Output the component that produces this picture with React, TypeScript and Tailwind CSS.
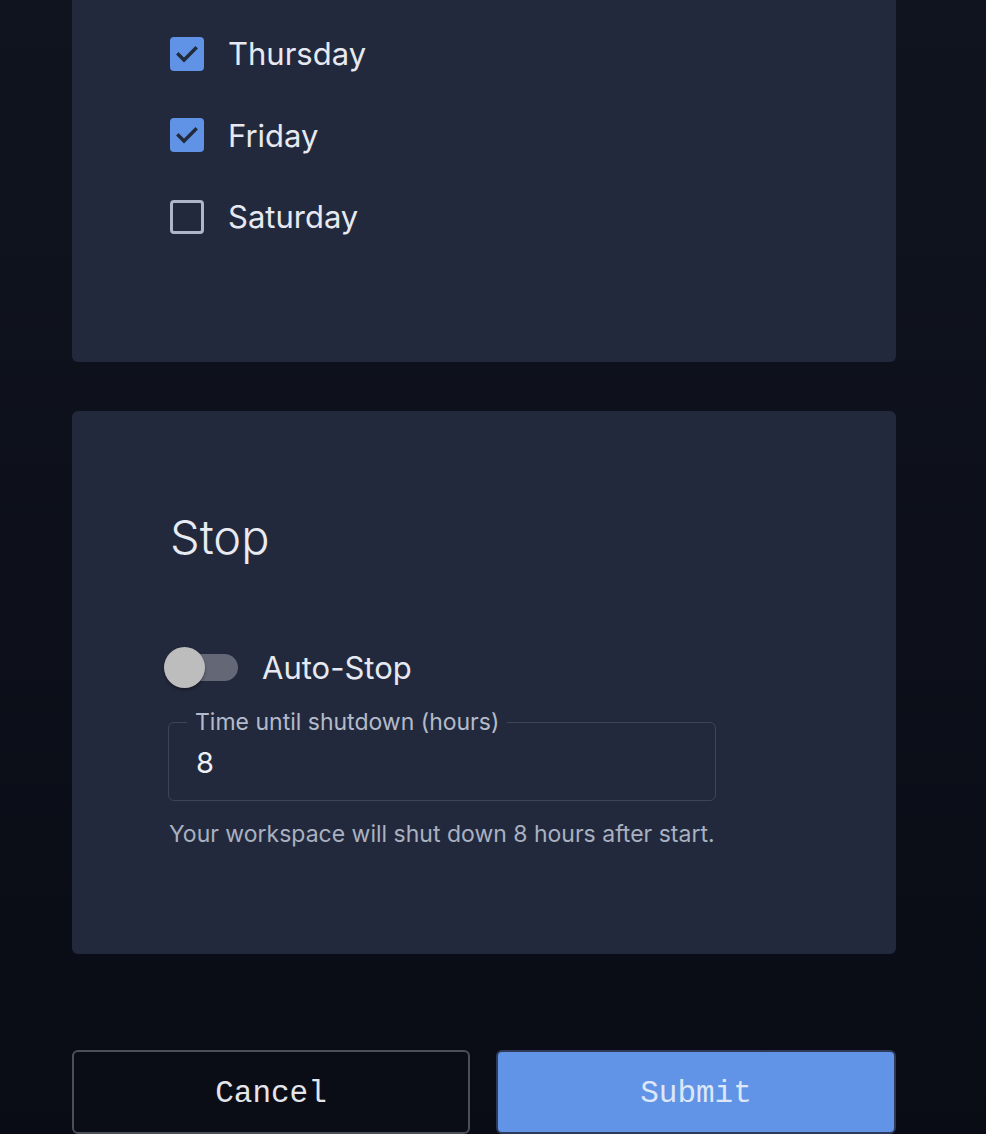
import { useState } from "react";

const days = [
  { name: "Thursday", checked: true },
  { name: "Friday", checked: true },
  { name: "Saturday", checked: false },
];

function Checkbox({ checked }: { checked: boolean }) {
  if (!checked) {
    return (
      <span className="block h-[34px] w-[34px] rounded-[4px] border-[3px] border-[#aeb6c7]" />
    );
  }
  return (
    <span className="flex h-[34px] w-[34px] items-center justify-center rounded-[4px] bg-[#6093e5]">
      <svg viewBox="0 0 34 34" className="h-[34px] w-[34px]">
        <path
          d="M8.5 17.5 L14 23 L25.5 11.5"
          fill="none"
          stroke="#222a3c"
          strokeWidth="3.4"
          strokeLinecap="square"
        />
      </svg>
    </span>
  );
}

export default function App() {
  const [hours, setHours] = useState("8");
  const [autoStop, setAutoStop] = useState(false);

  return (
    <div
      className="min-h-[1134px] bg-gradient-to-b from-[#10141f] to-[#090c15] pb-[2px]"
      style={{ fontFamily: "Inter, 'Noto Sans', sans-serif" }}
    >
      <div className="ml-[72px] w-[824px]">
        {/* days panel (continues above the fold) */}
        <section className="rounded-b-[6px] bg-[#23293c] px-[98px] pt-[13px] pb-[104px]">
          {days.map((d) => (
            <label key={d.name} className="flex h-[81.5px] items-center gap-[24px]">
              <Checkbox checked={d.checked} />
              <span className="text-[31px] leading-none text-[#e6e9f1]">{d.name}</span>
            </label>
          ))}
        </section>

        <section className="mt-[49px] rounded-[6px] bg-[#23293c] pl-[98px] pt-[99px] pb-[106px]">
          <h2 className="text-[47px] leading-[54px] font-light text-[#e8ebf2]">Stop</h2>

          <div className="mt-[83px] flex items-center">
            <button
              type="button"
              onClick={() => setAutoStop(!autoStop)}
              className="relative h-[41px] w-[76px]"
            >
              <span className="absolute left-[6px] top-[7px] h-[27px] w-[62px] rounded-full bg-[#636776]" />
              <span className="absolute left-[-6px] top-0 h-[41px] w-[41px] rounded-full bg-[#bdbdbd] shadow-[0_2px_3px_rgba(0,0,0,0.35)]" />
            </button>
            <span className="ml-[16px] text-[31px] leading-none text-[#e6e9f1]">Auto-Stop</span>
          </div>

          <div className="relative mt-[34px] ml-[-2px] h-[79px] w-[548px] rounded-[6px] border border-[#3b4459]">
            <span className="absolute left-[18px] top-[-15px] bg-[#23293c] px-[8px] text-[23px] leading-[28px] text-[#b3bbcb]">
              Time until shutdown (hours)
            </span>
            <input
              value={hours}
              onChange={(e) => setHours(e.target.value)}
              className="h-full w-full bg-transparent px-[27px] pt-[2px] text-[29px] text-[#eef0f5] outline-none"
            />
          </div>
          <p className="mt-[19px] ml-[-1px] text-[23px] leading-[28px] text-[#a9b1c1]">
            Your workspace will shut down {hours} hours after start.
          </p>
        </section>

        <div
          className="mt-[96px] flex gap-[26px]"
          style={{ fontFamily: "'Liberation Mono', 'DejaVu Sans Mono', monospace" }}
        >
          <button
            type="button"
            className="h-[84px] w-[398px] rounded-[6px] border-2 border-[#4b4f59] bg-[#0a0d16] pt-[5px] text-[31px] text-[#e3e5ea]"
          >
            Cancel
          </button>
          <button
            type="button"
            className="h-[84px] w-[400px] rounded-[6px] border-2 border-[#2e3a57] bg-[#6194e6] pt-[5px] text-[31px] text-[#dde7f8]"
          >
            Submit
          </button>
        </div>
      </div>
    </div>
  );
}
